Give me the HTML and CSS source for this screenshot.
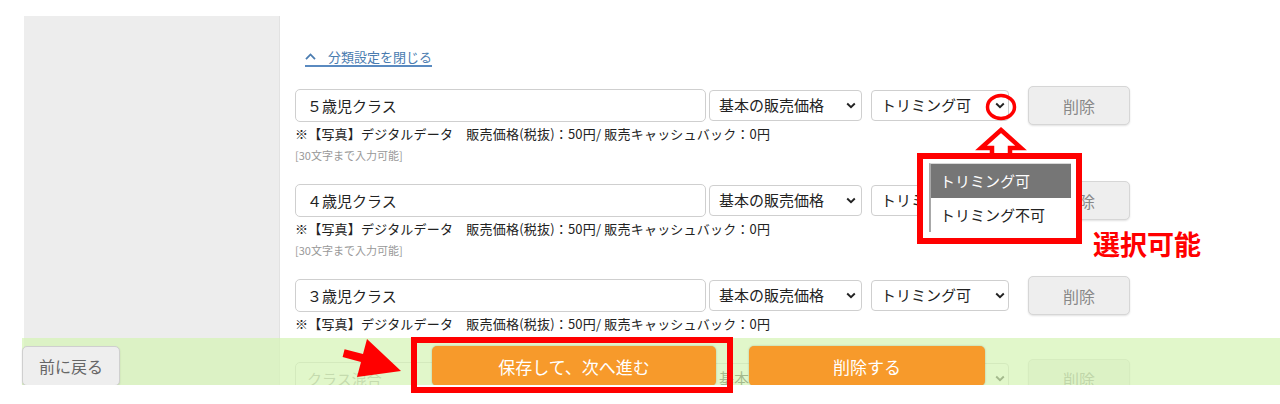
FILE: index.html
```html
<!DOCTYPE html>
<html lang="ja">
<head>
<meta charset="utf-8">
<title>分類設定</title>
<link rel="stylesheet" href="styles.css">
</head>
<body>
<div class="viewport">
  <div class="layout">
    <aside class="sidebar"></aside>
    <main class="main">
      <div class="toggle-wrap">
        <a class="toggle" href="#">
          <svg class="toggle-icon" width="11" height="7" viewBox="0 0 11 7"><path d="M1 6.2 L5.5 1.5 L10 6.2" fill="none" stroke="#4a7cb0" stroke-width="1.8"/></svg>
          <span>分類設定を閉じる</span>
        </a>
      </div>
      <div class="class-list">
        <section class="class-item">
          <div class="class-row">
            <div class="name-input">５歳児クラス</div>
            <div class="select select-price"><span>基本の販売価格</span><svg class="chev" width="10" height="7" viewBox="0 0 10 7"><path d="M1.2 1.5 L5 5.2 L8.8 1.5" fill="none" stroke="#222" stroke-width="1.9"/></svg></div>
            <div class="select select-trim"><span>トリミング可</span><svg class="chev" width="10" height="7" viewBox="0 0 10 7"><path d="M1.2 1.5 L5 5.2 L8.8 1.5" fill="none" stroke="#222" stroke-width="1.9"/></svg></div>
            <button class="btn-delete">削除</button>
          </div>
          <p class="note">※【写真】デジタルデータ　販売価格(税抜)：50円/ 販売キャッシュバック：0円</p>
          <p class="limit">[30文字まで入力可能]</p>
        </section>
        <section class="class-item">
          <div class="class-row">
            <div class="name-input">４歳児クラス</div>
            <div class="select select-price"><span>基本の販売価格</span><svg class="chev" width="10" height="7" viewBox="0 0 10 7"><path d="M1.2 1.5 L5 5.2 L8.8 1.5" fill="none" stroke="#222" stroke-width="1.9"/></svg></div>
            <div class="select select-trim"><span>トリミング可</span><svg class="chev" width="10" height="7" viewBox="0 0 10 7"><path d="M1.2 1.5 L5 5.2 L8.8 1.5" fill="none" stroke="#222" stroke-width="1.9"/></svg></div>
            <button class="btn-delete">削除</button>
          </div>
          <p class="note">※【写真】デジタルデータ　販売価格(税抜)：50円/ 販売キャッシュバック：0円</p>
          <p class="limit">[30文字まで入力可能]</p>
        </section>
        <section class="class-item class-item-short">
          <div class="class-row">
            <div class="name-input">３歳児クラス</div>
            <div class="select select-price"><span>基本の販売価格</span><svg class="chev" width="10" height="7" viewBox="0 0 10 7"><path d="M1.2 1.5 L5 5.2 L8.8 1.5" fill="none" stroke="#222" stroke-width="1.9"/></svg></div>
            <div class="select select-trim"><span>トリミング可</span><svg class="chev" width="10" height="7" viewBox="0 0 10 7"><path d="M1.2 1.5 L5 5.2 L8.8 1.5" fill="none" stroke="#222" stroke-width="1.9"/></svg></div>
            <button class="btn-delete">削除</button>
          </div>
          <p class="note">※【写真】デジタルデータ　販売価格(税抜)：50円/ 販売キャッシュバック：0円</p>
        </section>
        <section class="class-item">
          <div class="class-row">
            <div class="name-input placeholder">クラス混合</div>
            <div class="select select-price"><span>基本の販売価格</span><svg class="chev" width="10" height="7" viewBox="0 0 10 7"><path d="M1.2 1.5 L5 5.2 L8.8 1.5" fill="none" stroke="#222" stroke-width="1.9"/></svg></div>
            <div class="select select-trim"><span>トリミング可</span><svg class="chev" width="10" height="7" viewBox="0 0 10 7"><path d="M1.2 1.5 L5 5.2 L8.8 1.5" fill="none" stroke="#222" stroke-width="1.9"/></svg></div>
            <button class="btn-delete">削除</button>
          </div>
        </section>
      </div>
    </main>
  </div>
  <footer class="footer">
    <button class="btn-back">前に戻る</button>
    <button class="btn-primary btn-save">保存して、次へ進む</button>
    <button class="btn-primary btn-remove">削除する</button>
  </footer>
</div>

<svg class="marks" width="1280" height="404" viewBox="0 0 1280 404">
  <ellipse cx="1001" cy="107" rx="13.5" ry="11.5" fill="none" stroke="#ff0000" stroke-width="3.5"/>
  <polygon points="1001,130 1021,148 1010,148 1010,158 992,158 992,148 981,148" fill="#fff" stroke="#ff0000" stroke-width="4.5" stroke-linejoin="miter"/>
  <polygon points="344.6,349.3 363,354.1 367,339 401,371 357,377 361,361.9 342.6,357.1" fill="#ff0000"/>
</svg>

<div class="callout">
  <ul class="dropdown">
    <li class="dropdown-item is-active">トリミング可</li>
    <li class="dropdown-item">トリミング不可</li>
  </ul>
</div>
<div class="callout-label">選択可能</div>
<div class="save-highlight"></div>
</body>
</html>
```

FILE: styles.css
```css
* {
  box-sizing: border-box;
}

html,
body {
  margin: 0;
  padding: 0;
  background: #fff;
}

body {
  position: relative;
  width: 1280px;
  height: 404px;
  overflow: hidden;
  font-family: "Noto Sans CJK JP", "Noto Sans", sans-serif;
  color: #222;
}

.viewport {
  position: relative;
  height: 385px;
  overflow: hidden;
}

.layout {
  display: flex;
  height: 100%;
  padding: 16px 0 0 24px;
}

.sidebar {
  flex: 0 0 256px;
  background: #ededed;
  border-right: 1px solid #e2e2e2;
}

.main {
  flex: 1;
  padding: 32px 0 0 15px;
}

.toggle-wrap {
  display: flex;
  padding-left: 10px;
}

.toggle {
  display: flex;
  align-items: center;
  gap: 12px;
  font-size: 13px;
  line-height: 17px;
  color: #4a7cb0;
  text-decoration: none;
  border-bottom: 2px solid #5a8ac0;
}

.toggle-icon {
  display: block;
}

.class-list {
  margin-top: 19px;
}

.class-item {
  margin-bottom: 18px;
}

.class-item-short {
  margin-bottom: 26px;
}

.class-row {
  display: flex;
  align-items: center;
  height: 39px;
}

.name-input {
  display: flex;
  align-items: center;
  width: 411px;
  height: 33px;
  padding-left: 11px;
  border: 1px solid #cfcfcf;
  border-radius: 5px;
  background: #fff;
  font-size: 15px;
}

.name-input.placeholder {
  color: #999;
}

.select {
  display: flex;
  align-items: center;
  justify-content: space-between;
  height: 31px;
  padding: 0 5px 3px 9px;
  border: 1px solid #cfcfcf;
  border-radius: 4px;
  background: #fff;
  font-size: 15px;
}

.select .chev {
  display: block;
  margin-top: 3px;
}

.select-price {
  width: 153px;
  margin-left: 3px;
}

.select-trim {
  width: 138px;
  margin-left: 9px;
  padding-right: 3px;
}

.btn-delete {
  width: 102px;
  height: 39px;
  margin-left: 19px;
  border: 1px solid #d6d6d6;
  border-radius: 5px;
  background: #eee;
  box-shadow: 0 1px 2px rgba(0, 0, 0, 0.12);
  color: #888;
  font-family: inherit;
  font-size: 16px;
}

.note {
  margin: 0;
  font-size: 13px;
  line-height: 18px;
  letter-spacing: 0.2px;
  color: #222;
}

.limit {
  margin: 4px 0 0;
  font-size: 11px;
  line-height: 16px;
  color: #999;
}

.footer {
  position: absolute;
  left: 22px;
  right: 0;
  top: 338px;
  height: 47px;
  display: flex;
  align-items: flex-start;
  padding-top: 8px;
  background: rgba(214, 244, 182, 0.72);
}

.footer button {
  font-family: inherit;
  height: 40px;
  border-radius: 5px;
}

.btn-back {
  width: 98px;
  border: 1px solid #cfcfcf;
  background: #eee;
  color: #666;
  font-size: 16px;
  box-shadow: 0 1px 2px rgba(0, 0, 0, 0.12);
}

.btn-primary {
  border: none;
  background: #f79a2b;
  color: #fff;
  font-size: 17px;
  box-shadow: 0 0 2px rgba(0, 0, 0, 0.25);
}

.btn-save {
  width: 284px;
  margin-left: 312px;
}

.btn-remove {
  width: 236px;
  margin-left: 33px;
}

.marks {
  position: absolute;
  left: 0;
  top: 0;
}

.callout {
  position: absolute;
  left: 917px;
  top: 153px;
  width: 165px;
  height: 91px;
  padding: 4px 5px 0 6px;
  border: 6px solid #ff0000;
  background: #fff;
}

.dropdown {
  margin: 0;
  padding: 0;
  list-style: none;
  width: 142px;
  height: 69px;
  border-left: 2px solid #a8a8a8;
  border-top: 1px solid #d8d8d8;
}

.dropdown-item {
  height: 34px;
  padding-left: 9px;
  font-size: 15px;
  line-height: 34px;
  color: #222;
}

.dropdown-item.is-active {
  background: #767676;
  color: #fff;
}

.callout-label {
  position: absolute;
  left: 1093px;
  top: 229px;
  font-size: 27px;
  line-height: 30px;
  font-weight: bold;
  color: #ff0000;
}

.save-highlight {
  position: absolute;
  left: 411px;
  top: 337px;
  width: 322px;
  height: 56px;
  border: 6px solid #ff0000;
}
```
